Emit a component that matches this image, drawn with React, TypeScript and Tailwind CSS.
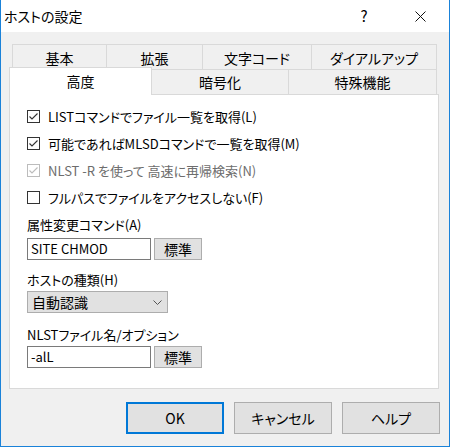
import React from "react";

const font = "font-['Noto_Sans_CJK_JP','Noto_Sans',sans-serif] [font-feature-settings:'palt']";

function Check({ checked, disabled }: { checked: boolean; disabled?: boolean }) {
  const color = disabled ? "#bcbcbc" : "#333333";
  return (
    <svg width="13" height="13" viewBox="0 0 13 13" className="shrink-0">
      <rect x="0.5" y="0.5" width="12" height="12" fill="#ffffff" stroke={color} />
      {checked && <path d="M2.5 6.5 L5 9 L10.5 3.5" fill="none" stroke={color} strokeWidth="1.1" />}
    </svg>
  );
}

function CheckRow({ label, checked, disabled }: { label: string; checked: boolean; disabled?: boolean }) {
  return (
    <div className="flex h-[27px] items-center gap-[8px]">
      <Check checked={checked} disabled={disabled} />
      <span className={disabled ? "text-[#6d6d6d]" : "text-black"}>{label}</span>
    </div>
  );
}

function Button({ children, primary, className }: { children: React.ReactNode; primary?: boolean; className?: string }) {
  return (
    <div
      className={
        "flex items-center justify-center bg-[#e1e1e1] " +
        (primary ? "border-2 border-[#0078d7] " : "border border-[#adadad] ") +
        (className ?? "")
      }
    >
      {children}
    </div>
  );
}

export default function App() {
  const row1 = [
    { label: "基本", w: "w-[95px]" },
    { label: "拡張", w: "w-[96px]" },
    { label: "文字コード", w: "w-[109px]" },
    { label: "ダイアルアップ", w: "w-[125px]" },
  ];

  return (
    <div className={"w-[450px] h-[447px] flex flex-col bg-[#f0f0f0] border-x border-b border-[#1a82d9] text-[13px] text-black " + font}>
      {/* title bar */}
      <div className="h-[32px] bg-white flex items-center shrink-0">
        <span className="pl-[3px] text-[14px]">ホストの設定</span>
        <div className="flex-1" />
        <span className="w-[46px] text-center text-[15px] mr-[10px]">?</span>
        <div className="w-[46px] flex justify-center mr-[6px]">
          <svg width="11" height="11" viewBox="0 0 11 11">
            <path d="M0.5 0.5 L10.5 10.5 M10.5 0.5 L0.5 10.5" stroke="#111" strokeWidth="1" />
          </svg>
        </div>
      </div>

      {/* tabs */}
      <div className="mt-[12px] ml-[11px] flex h-[25px] text-[14px]">
        {row1.map((t, i) => (
          <div
            key={t.label}
            className={
              t.w +
              " flex items-center justify-center pt-[3px] border-t border-r border-[#d9d9d9] " +
              (i === 0 ? "border-l" : "")
            }
          >
            {t.label}
          </div>
        ))}
      </div>
      <div className="ml-[8px] flex items-start text-[14px]">
        <div className="relative z-10 -mt-[2px] -mb-[1px] h-[28px] w-[143px] bg-white border-x border-t border-[#d9d9d9] flex items-center justify-center">
          高度
        </div>
        <div className="h-[25px] w-[137px] border-t border-r border-[#d9d9d9] flex items-center justify-center">
          暗号化
        </div>
        <div className="h-[25px] w-[148px] border-t border-r border-[#d9d9d9] flex items-center justify-center">
          特殊機能
        </div>
      </div>

      {/* panel */}
      <div className="ml-[8px] w-[430px] h-[295px] bg-white border border-[#d9d9d9] pl-[17px] pt-[8px] flex flex-col">
        <CheckRow label="LISTコマンドでファイル一覧を取得(L)" checked />
        <CheckRow label="可能であればMLSDコマンドで一覧を取得(M)" checked />
        <CheckRow label="NLST -R を使って 高速に再帰検索(N)" checked disabled />
        <CheckRow label="フルパスでファイルをアクセスしない(F)" checked={false} />

        <div className="mt-[4px] h-[20px] flex items-center">属性変更コマンド(A)</div>
        <div className="mt-[3px] flex gap-[3px]">
          <div className="w-[124px] h-[22px] border border-[#7a7a7a] flex items-center px-[3px]">SITE CHMOD</div>
          <Button className="w-[48px] h-[22px] text-[14px]">標準</Button>
        </div>

        <div className="mt-[10px] h-[20px] flex items-center">ホストの種類(H)</div>
        <div className="mt-[1px] w-[141px] h-[22px] bg-[#e1e1e1] border border-[#adadad] flex items-center pl-[4px] pr-[5px] text-[14px]">
          <span className="flex-1">自動認識</span>
          <svg width="9" height="5" viewBox="0 0 9 5">
            <path d="M0.5 0.5 L4.5 4.5 L8.5 0.5" fill="none" stroke="#555" strokeWidth="1" />
          </svg>
        </div>

        <div className="mt-[12px] h-[20px] flex items-center">NLSTファイル名/オプション</div>
        <div className="mt-[1px] flex gap-[3px]">
          <div className="w-[124px] h-[22px] border border-[#7a7a7a] flex items-center px-[3px]">-alL</div>
          <Button className="w-[48px] h-[22px] text-[14px]">標準</Button>
        </div>
      </div>

      {/* buttons */}
      <div className="mt-[13px] flex justify-end gap-[10px] pr-[9px] text-[14px]">
        <Button primary className="w-[98px] h-[32px]">OK</Button>
        <Button className="w-[98px] h-[32px]">キャンセル</Button>
        <Button className="w-[98px] h-[32px]">ヘルプ</Button>
      </div>
    </div>
  );
}
